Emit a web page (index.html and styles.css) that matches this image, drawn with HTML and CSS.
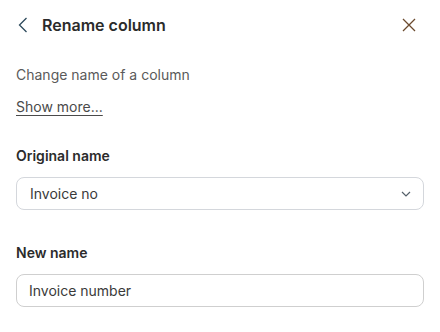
FILE: index.html
```html
<!DOCTYPE html>
<html>
<head>
    <title>Rename column</title>
    <link rel="stylesheet" href="styles.css">
</head>
<body>

<div class="panel">
    <div class="header">
        <button class="icon-btn back" aria-label="Back">
            <svg width="10" height="16" viewBox="0 0 10 16"><path d="M8.5 1 L1.5 8 L8.5 15" fill="none" stroke="#2d4a5c" stroke-width="1.3"/></svg>
        </button>
        <h2 class="title">Rename column</h2>
        <button class="icon-btn close" aria-label="Close">
            <svg width="14" height="14" viewBox="0 0 14 14"><path d="M1 1 L13 13 M13 1 L1 13" fill="none" stroke="#6b4a2e" stroke-width="1.3"/></svg>
        </button>
    </div>

    <p class="desc">Change name of a column</p>
    <a href="#" class="more">Show more...</a>

    <div class="field">
        <label class="label">Original name</label>
        <div class="select">
            <span>Invoice no</span>
            <svg width="10" height="6" viewBox="0 0 10 6"><path d="M1 1 L5 5 L9 1" fill="none" stroke="#55606a" stroke-width="1.2"/></svg>
        </div>
    </div>

    <div class="field field-new">
        <label class="label">New name</label>
        <input class="text-input" type="text" value="Invoice number">
    </div>
</div>

</body>
</html>
```

FILE: styles.css
```css
body {
    margin: 0;
    background: #ffffff;
    font-family: Inter, 'Noto Sans', sans-serif;
    color: #2b2b2b;
}
.panel {
    padding: 14px 16px 0 16px;
}
.header {
    display: flex;
    align-items: center;
    height: 22px;
}
.icon-btn {
    background: none;
    border: none;
    padding: 0;
    display: flex;
    align-items: center;
    cursor: pointer;
}
.back {
    margin-left: 2px;
    margin-right: 14px;
}
.close {
    margin-left: auto;
    margin-right: 8px;
}
.title {
    margin: 0;
    font-size: 16px;
    font-weight: 600;
    color: #2b2b2b;
}
.desc {
    margin: 29px 0 0 0;
    font-size: 14px;
    line-height: 20px;
    color: #5a5a5a;
}
.more {
    display: inline-block;
    margin-top: 12px;
    font-size: 14px;
    line-height: 20px;
    color: #4a4a4a;
    text-decoration: underline;
    text-underline-offset: 3px;
}
.field {
    margin-top: 29px;
}
.field-new {
    margin-top: 33px;
}
.label {
    display: block;
    font-size: 14px;
    font-weight: 600;
    line-height: 20px;
    color: #2b2b2b;
    margin-bottom: 11px;
}
.select, .text-input {
    box-sizing: border-box;
    width: 100%;
    height: 33px;
    border: 1px solid #d4d7dc;
    border-radius: 8px;
    padding: 0 12px;
    font-family: inherit;
    font-size: 14px;
    color: #3a3a3a;
    background: #fff;
}
.select {
    display: flex;
    align-items: center;
    justify-content: space-between;
}
.select span {
    padding-left: 1px;
}
.text-input {
    border-color: #cfcfcf;
    outline: none;
}
```
